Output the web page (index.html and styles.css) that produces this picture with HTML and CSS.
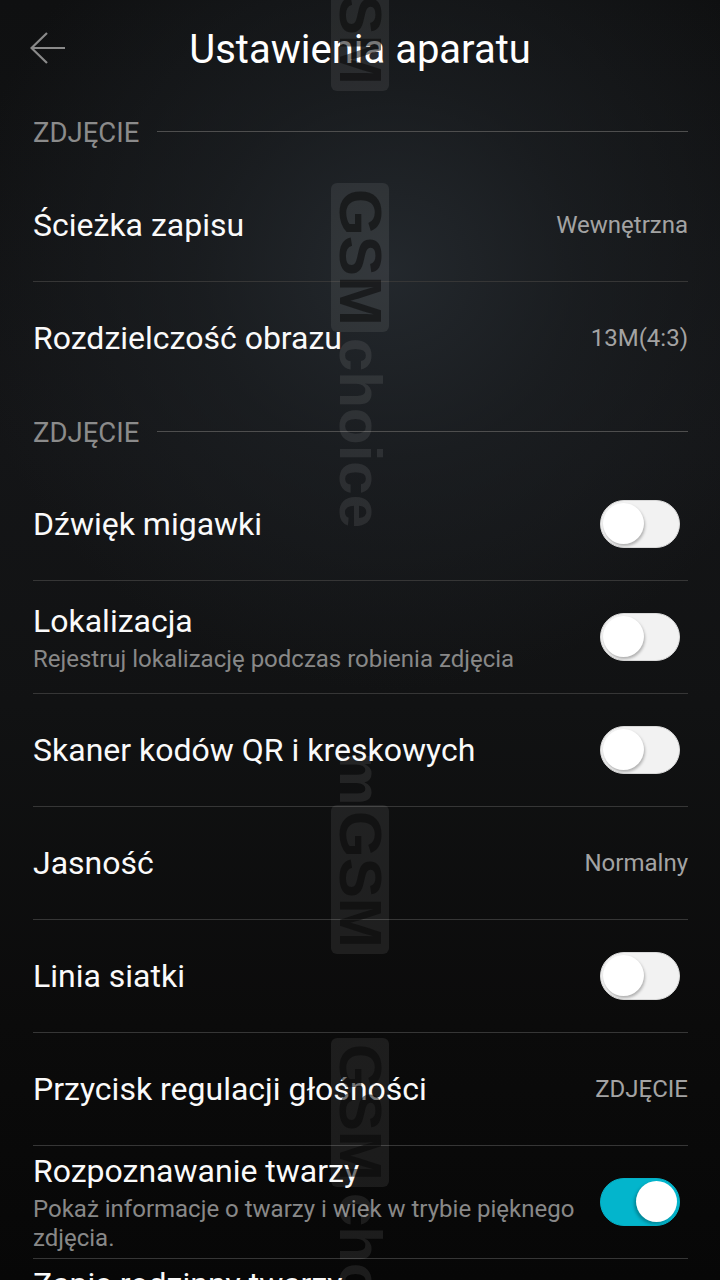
FILE: index.html
```html
<!DOCTYPE html>
<html lang="pl">
<head>
<meta charset="utf-8">
<title>Ustawienia aparatu</title>
<link rel="stylesheet" href="styles.css">
</head>
<body>
<div class="screen">
  <header class="topbar">
    <div class="back">
      <svg width="36" height="32" viewBox="0 0 36 32"><path d="M17 1 L1.5 16 L17 31 M1.5 16 H35" fill="none" stroke="#8a8a8a" stroke-width="2.2"/></svg>
    </div>
    <h1 class="title">Ustawienia aparatu</h1>
    <div></div>
  </header>

  <div class="section"><span class="section-label">ZDJĘCIE</span><span class="section-line"></span></div>
  <div class="row"><div class="text"><div class="row-title">Ścieżka zapisu</div></div><div class="value">Wewnętrzna</div></div>
  <div class="row no-border"><div class="text"><div class="row-title">Rozdzielczość obrazu</div></div><div class="value">13M(4:3)</div></div>

  <div class="section compact"><span class="section-label">ZDJĘCIE</span><span class="section-line"></span></div>
  <div class="row"><div class="text"><div class="row-title">Dźwięk migawki</div></div><div class="switch"><span class="knob"></span></div></div>
  <div class="row"><div class="text"><div class="row-title">Lokalizacja</div><div class="row-sub">Rejestruj lokalizację podczas robienia zdjęcia</div></div><div class="switch"><span class="knob"></span></div></div>
  <div class="row"><div class="text"><div class="row-title">Skaner kodów QR i kreskowych</div></div><div class="switch"><span class="knob"></span></div></div>
  <div class="row"><div class="text"><div class="row-title">Jasność</div></div><div class="value">Normalny</div></div>
  <div class="row"><div class="text"><div class="row-title">Linia siatki</div></div><div class="switch"><span class="knob"></span></div></div>
  <div class="row"><div class="text"><div class="row-title">Przycisk regulacji głośności</div></div><div class="value">ZDJĘCIE</div></div>
  <div class="row"><div class="text"><div class="row-title">Rozpoznawanie twarzy</div><div class="row-sub">Pokaż informacje o twarzy i wiek w trybie pięknego zdjęcia.</div></div><div class="switch on"><span class="knob"></span></div></div>
  <div class="row"><div class="text"><div class="row-title">Zapis rodzinny twarzy</div><div class="row-sub">Zapisuj informacje o twarzach członków rodziny w zdjęciach.</div></div><div class="switch"><span class="knob"></span></div></div>

  <div class="wm wm1"><span class="wm-box">GSM</span></div>
  <div class="wm wm2"><span class="wm-box">GSM</span><span class="wm-txt">choice</span></div>
  <div class="wm wm3"><span class="wm-txt">m</span><span class="wm-box">GSM</span></div>
  <div class="wm wm4"><span class="wm-box">GSM</span><span class="wm-txt">choice</span></div>
</div>
</body>
</html>
```
FILE: styles.css
```css
html, body {
  margin: 0;
  padding: 0;
}
body {
  width: 720px;
  height: 1280px;
  overflow: hidden;
  background: #0a0a0a;
  font-family: Roboto, "Noto Sans", sans-serif;
  color: #fff;
}
.screen {
  position: relative;
  width: 720px;
  height: 1280px;
  overflow: hidden;
  background:
    radial-gradient(ellipse 430px 420px at 390px 270px, rgba(36, 41, 46, 0.95) 0%, rgba(30, 34, 38, 0.6) 45%, rgba(20, 21, 23, 0) 100%),
    linear-gradient(to bottom, #0f1011 0%, #141517 35%, #111213 55%, #0b0b0b 80%, #070707 100%);
}
.topbar {
  height: 94px;
  display: grid;
  grid-template-columns: 1fr auto 1fr;
  align-items: center;
}
.back {
  padding-left: 30px;
  display: flex;
  align-items: center;
  height: 32px;
  margin-top: 2px;
}
.back svg { display: block; }
.title {
  margin: 0;
  font-weight: 400;
  font-size: 40px;
  line-height: 46px;
  margin-top: 6px;
  color: #fff;
}
.section {
  height: 75px;
  display: flex;
  align-items: center;
  gap: 18px;
  padding: 0 32px 0 33px;
}
.section.compact { height: 73px; }
.section-label {
  font-size: 27.5px;
  color: #8b8b8b;
  line-height: 32px;
  margin-top: 2px;
}
.section-line {
  flex: 1;
  height: 1px;
  background: #4e4e4e;
}
.row {
  height: 112px;
  margin: 0 32px 0 33px;
  border-bottom: 1px solid #363636;
  display: flex;
  align-items: center;
  gap: 16px;
}
.row.no-border { border-bottom-color: transparent; }
.text {
  flex: 1;
  min-width: 0;
}
.row-title {
  font-size: 32px;
  line-height: 40px;
  color: #fafafa;
  white-space: nowrap;
}
.row-sub {
  font-size: 24px;
  line-height: 29px;
  color: #888888;
  margin-top: 4px;
}
.value {
  font-size: 24px;
  color: #a3a3a3;
  white-space: nowrap;
}
.switch {
  position: relative;
  flex: none;
  width: 78px;
  height: 46px;
  border-radius: 24px;
  background: #f2f2f2;
  border: 1px solid #d8d8d8;
  margin-right: 8px;
}
.knob {
  position: absolute;
  top: 2px;
  left: 2px;
  width: 41px;
  height: 41px;
  border-radius: 50%;
  background: #fff;
  box-shadow: 1px 2px 3px rgba(0, 0, 0, 0.28);
}
.switch.on {
  background: #03b5cc;
  border-color: #03b0c6;
}
.switch.on .knob {
  left: auto;
  right: 2px;
  box-shadow: -2px 2px 3px rgba(0, 0, 0, 0.25);
}
.wm {
  position: absolute;
  left: 331px;
  writing-mode: vertical-rl;
  font-family: "Liberation Sans", Arial, sans-serif;
  font-weight: 700;
  font-size: 60px;
  line-height: 58px;
  pointer-events: none;
  white-space: nowrap;
}
.wm-box {
  display: inline-block;
  background: rgba(255, 255, 255, 0.08);
  color: rgba(8, 8, 8, 0.55);
  border-radius: 6px;
  padding: 6px 0;
}
.wm-txt {
  color: rgba(255, 255, 255, 0.085);
  padding-top: 6px;
}
.wm1 { top: -58px; }
.wm2 { top: 183px; }
.wm3 { top: 746px; }
.wm4 { top: 1038px; }
```
